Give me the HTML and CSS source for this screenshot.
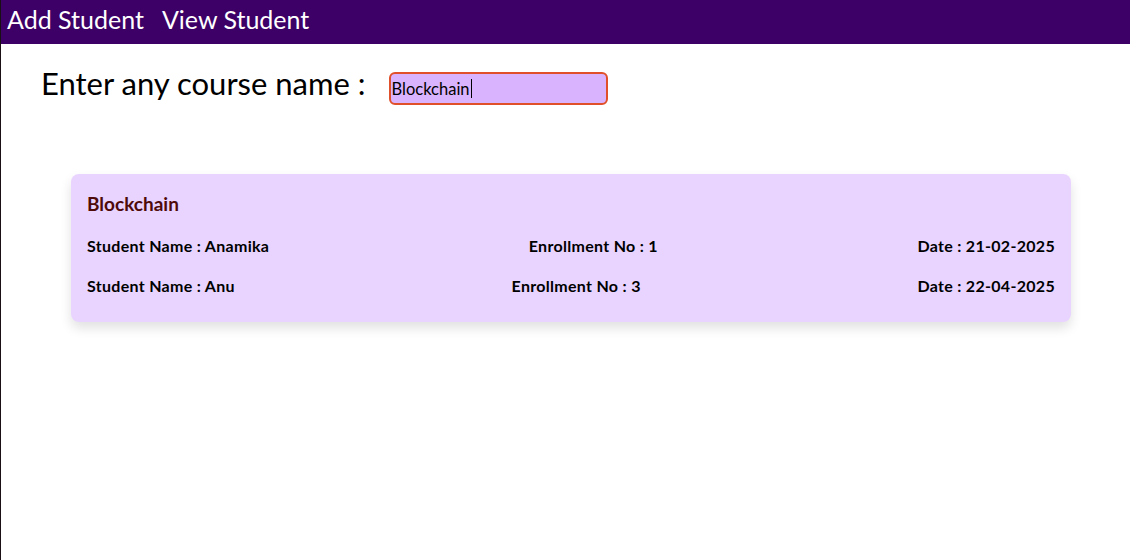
FILE: index.html
```html
<!DOCTYPE html>
<html>
<head>
<meta charset="utf-8">
<link rel="stylesheet" href="styles.css">
</head>
<body>
<div class="page">
  <nav class="nav">
    <a class="nav-link">Add Student</a>
    <a class="nav-link">View Student</a>
  </nav>
  <div class="search">
    <label class="search-label">Enter any course name :</label>
    <div class="search-input">Blockchain<span class="caret"></span></div>
  </div>
  <div class="card">
    <h3 class="card-title">Blockchain</h3>
    <div class="row">
      <span>Student Name : Anamika</span>
      <span>Enrollment No : 1</span>
      <span>Date : 21-02-2025</span>
    </div>
    <div class="row">
      <span>Student Name : Anu</span>
      <span>Enrollment No : 3</span>
      <span>Date : 22-04-2025</span>
    </div>
  </div>
</div>
</body>
</html>
```

FILE: styles.css
```css
html, body {
  margin: 0;
  padding: 0;
  background: #ffffff;
}
body {
  font-family: "Lato", "Noto Sans", sans-serif;
}
.page {
  height: 560px;
  border-left: 1px solid #1a0f14;
  box-sizing: border-box;
}
.nav {
  height: 44px;
  background: #3c0066;
  display: flex;
  align-items: center;
  gap: 18px;
  padding-left: 6px;
}
.nav-link {
  color: #ffffff;
  font-size: 25px;
  line-height: 1;
  margin-top: -6px;
}
.search {
  display: flex;
  align-items: flex-start;
  padding-left: 40px;
  margin-top: 28px;
  gap: 23px;
}
.search-label {
  font-size: 31px;
  line-height: 33px;
  color: #000;
  margin-top: -5px;
}
.search-input {
  width: 219px;
  height: 33px;
  box-sizing: border-box;
  border: 2px solid #e0502a;
  border-radius: 6px;
  background: #dab3fe;
  font-size: 16.5px;
  color: #000;
  display: flex;
  align-items: center;
  padding-left: 1px;
}
.caret {
  display: inline-block;
  width: 1px;
  height: 19px;
  background: #000;
  margin-left: 1px;
}
.card {
  margin: 69px 0 0 70px;
  width: 1000px;
  box-sizing: border-box;
  background: #e9d4ff;
  border-radius: 8px;
  box-shadow: 0 6px 12px rgba(0, 0, 0, 0.12);
  padding: 18px 16px 27px;
  font-weight: 700;
}
.card-title {
  margin: 0 0 20px;
  font-size: 19px;
  line-height: 23px;
  color: #4f0a0a;
}
.row {
  display: flex;
  justify-content: space-between;
  font-size: 16px;
  letter-spacing: 0.3px;
  color: #000;
  height: 20px;
  align-items: center;
  margin-bottom: 20px;
}
.row:last-child {
  margin-bottom: 0;
}
```
